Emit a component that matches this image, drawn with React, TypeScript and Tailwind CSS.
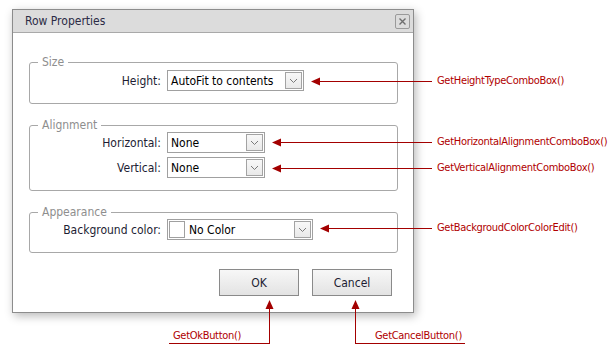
import type { ReactNode } from "react";

const FONT = "font-['DejaVu_Sans_Condensed','DejaVu_Sans',sans-serif]";

function Chevron() {
  return (
    <svg width="9" height="6" viewBox="0 0 9 6" className="block">
      <path d="M1 1 L4.5 4.5 L8 1" fill="none" stroke="#7a7a7a" strokeWidth="1" />
    </svg>
  );
}

function Combo({ width, children }: { width: string; children: ReactNode }) {
  return (
    <div className={`${width} h-[21px] border border-[#a0a0a0] bg-white flex items-center p-px`}>
      <div className="flex-1 flex items-center min-w-0 h-full">{children}</div>
      <div className="w-[17px] h-[17px] border border-[#a3a3a3] bg-gradient-to-b from-[#f8f8f8] to-[#e9e9e9] flex items-center justify-center">
        <Chevron />
      </div>
    </div>
  );
}

function Group({ title, height, pt, children }: { title: string; height: string; pt: string; children: ReactNode }) {
  return (
    <div className={`relative w-[369px] ${height} ${pt} border border-[#a8a8a8] rounded-[3px]`}>
      <span className="absolute -top-[9px] left-[8px] bg-white px-[4px] text-[12px] leading-[16px] text-[#8e8e8e]">
        {title}
      </span>
      {children}
    </div>
  );
}

function Row({ label, children }: { label: string; children: ReactNode }) {
  return (
    <div className="flex items-center">
      <span className="w-[131px] mr-[6px] text-right text-[12px] leading-[16px] text-[#1d1d33]">{label}</span>
      {children}
    </div>
  );
}

function Btn({ label }: { label: string }) {
  return (
    <div className="w-[80px] h-[27px] border border-[#8a8a8a] bg-gradient-to-b from-[#f7f7f7] to-[#e3e3e3] flex items-center justify-center text-[12px] text-[#1d1d33]">
      {label}
    </div>
  );
}

const RED = "#a30000";

function Note({ text, left, top }: { text: string; left: string; top: string }) {
  return (
    <span className={`absolute ${left} ${top} text-[11px] tracking-[-0.3px] leading-[14px] text-[#b00000] whitespace-nowrap`}>
      {text}
    </span>
  );
}

export default function App() {
  return (
    <div className={`relative w-[609px] h-[348px] bg-white overflow-hidden ${FONT}`}>
      <div className="ml-[12px] mt-[9px] w-[402px] h-[304px] border border-[#8c8c8c] bg-white shadow-[2px_3px_9px_rgba(0,0,0,0.28)] flex flex-col">
        <div className="h-[23px] shrink-0 bg-[#dcdcdc] border-b border-[#a9a9a9] flex items-center justify-between pl-[12px] pr-[3px]">
          <span className="text-[12px] leading-[16px] text-[#2b2b45]">Row Properties</span>
          <div className="w-[15px] h-[15px] border border-[#9a9a9a] rounded-[2px] flex items-center justify-center">
            <svg width="7" height="7" viewBox="0 0 7 7">
              <path d="M0.5 0.5 L6.5 6.5 M6.5 0.5 L0.5 6.5" stroke="#6e6e6e" strokeWidth="1.4" />
            </svg>
          </div>
        </div>

        <div className="pl-[16px] pt-[29px] flex flex-col">
          <Group title="Size" height="h-[42px]" pt="pt-[7px]">
            <Row label="Height:">
              <Combo width="w-[137px]">
                <span className="pl-[2px] text-[12px] text-[#000]">AutoFit to contents</span>
              </Combo>
            </Row>
          </Group>

          <div className="mt-[21px]">
            <Group title="Alignment" height="h-[66px]" pt="pt-[6px]">
              <div className="flex flex-col gap-[4px]">
                <Row label="Horizontal:">
                  <Combo width="w-[98px]">
                    <span className="pl-[2px] text-[12px] text-[#000]">None</span>
                  </Combo>
                </Row>
                <Row label="Vertical:">
                  <Combo width="w-[98px]">
                    <span className="pl-[2px] text-[12px] text-[#000]">None</span>
                  </Combo>
                </Row>
              </div>
            </Group>
          </div>

          <div className="mt-[21px]">
            <Group title="Appearance" height="h-[41px]" pt="pt-[6px]">
              <Row label="Background color:">
                <Combo width="w-[146px]">
                  <div className="w-[16px] h-[17px] border border-[#a0a0a0] bg-white" />
                  <span className="pl-[4px] text-[12px] text-[#000]">No Color</span>
                </Combo>
              </Row>
            </Group>
          </div>

          <div className="mt-[16px] w-[369px] pr-[6px] flex justify-end gap-[13px]">
            <Btn label="OK" />
            <Btn label="Cancel" />
          </div>
        </div>
      </div>

      <svg className="absolute inset-0 pointer-events-none" width="609" height="348">
        <g stroke={RED} strokeWidth="1" fill="none">
          <line x1="318" y1="81.5" x2="432" y2="81.5" />
          <line x1="278" y1="142.5" x2="432" y2="142.5" />
          <line x1="278" y1="168.5" x2="432" y2="168.5" />
          <line x1="327" y1="228.5" x2="432" y2="228.5" />
          <line x1="269.5" y1="308" x2="269.5" y2="343.5" />
          <line x1="169" y1="343.5" x2="270" y2="343.5" />
          <line x1="355.5" y1="308" x2="355.5" y2="343.5" />
          <line x1="355" y1="343.5" x2="465" y2="343.5" />
        </g>
        <g fill={RED}>
          <polygon points="311,81.5 320,77.5 320,85.5" />
          <polygon points="272,142.5 281,138.5 281,146.5" />
          <polygon points="272,168.5 281,164.5 281,172.5" />
          <polygon points="320,228.5 329,224.5 329,232.5" />
          <polygon points="269.5,300 265.5,309 273.5,309" />
          <polygon points="355.5,300 351.5,309 359.5,309" />
        </g>
      </svg>

      <Note text="GetHeightTypeComboBox()" left="left-[437px]" top="top-[74px]" />
      <Note text="GetHorizontalAlignmentComboBox()" left="left-[437px]" top="top-[135px]" />
      <Note text="GetVerticalAlignmentComboBox()" left="left-[437px]" top="top-[161px]" />
      <Note text="GetBackgroudColorColorEdit()" left="left-[437px]" top="top-[221px]" />
      <Note text="GetOkButton()" left="left-[173px]" top="top-[329px]" />
      <Note text="GetCancelButton()" left="left-[375px]" top="top-[329px]" />
    </div>
  );
}
